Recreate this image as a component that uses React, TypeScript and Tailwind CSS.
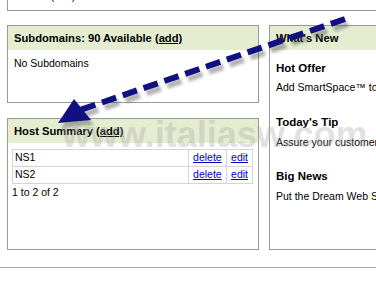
import React from 'react';

function Box({ title, className, children }: { title: React.ReactNode; className?: string; children: React.ReactNode }) {
  return (
    <div className={`border border-[#999] bg-white ${className ?? ''}`}>
      <div className="h-[24px] bg-[#e4edcf] px-[6px] flex items-center font-bold text-[11.2px]">{title}</div>
      {children}
    </div>
  );
}

function Arrow() {
  const line = 'M345 19 L80 110';
  return (
    <svg className="absolute inset-0 pointer-events-none" width="376" height="287" viewBox="0 0 376 287">
      <defs>
        <filter id="blur" x="-10%" y="-10%" width="120%" height="120%">
          <feGaussianBlur stdDeviation="1.6" />
        </filter>
      </defs>
      <g transform="translate(3 5)" opacity="0.45" filter="url(#blur)">
        <path d={line} stroke="#555" strokeWidth="6" strokeDasharray="15 7" fill="none" />
        <polygon points="58,123 74,99 91,120" fill="#555" />
      </g>
      <path d={line} stroke="#101080" strokeWidth="6" strokeDasharray="15 7" fill="none" />
      <polygon points="58,123 74,99 91,120" fill="#101080" />
    </svg>
  );
}

export default function App() {
  return (
    <div className="relative w-[376px] h-[287px] overflow-hidden bg-white text-black font-['Liberation_Sans',Arial,sans-serif] text-[10.5px]">
      <div className="-mt-[20px] pl-[7px]">
        {/* contact box, cut off at the top */}
        <div className="h-[31px] border border-r-0 border-[#999] px-[6px] pt-[9px] leading-[13px]">
          Tel: 001(323) 375-3344
        </div>

        <div className="mt-[14px] flex gap-[10px]">
          <div className="w-[252px] flex flex-col gap-[15px]">
            <Box
              className="h-[78px]"
              title={<span>Subdomains: 90 Available <a href="#" className="underline">(add)</a></span>}
            >
              <div className="px-[6px] pt-[6px]">No Subdomains</div>
            </Box>
            <Box
              className="h-[132px]"
              title={<span>Host Summary <a href="#" className="underline">(add)</a></span>}
            >
              <div className="pl-[4px] pr-[5px] pt-[6px]">
                <table className="w-full border-collapse">
                  <tbody>
                    {['NS1', 'NS2'].map((ns) => (
                      <tr key={ns} className="h-[17px]">
                        <td className="border border-[#d4d4d4] px-[2px]">{ns}</td>
                        <td className="border border-[#d4d4d4] px-[4px] w-[38px]">
                          <a href="#" className="text-[#0000cc] underline">delete</a>
                        </td>
                        <td className="border border-[#d4d4d4] px-[4px] w-[25px]">
                          <a href="#" className="text-[#0000cc] underline">edit</a>
                        </td>
                      </tr>
                    ))}
                  </tbody>
                </table>
                <div className="pt-[1px]">1 to 2 of 2</div>
              </div>
            </Box>
          </div>

          <Box className="h-[225px] flex-1 border-r-0 whitespace-nowrap overflow-hidden" title="What's New">
            <div className="px-[6px] pt-[10px] flex flex-col">
              <div className="font-bold text-[11.5px]">Hot Offer</div>
              <div className="mt-[3px]">Add SmartSpace™ to your account</div>
              <div className="mt-[18px] font-bold text-[11.5px]">Today's Tip</div>
              <div className="mt-[4px]">Assure your customers</div>
              <div className="mt-[17px] font-bold text-[11.5px]">Big News</div>
              <div className="mt-[4px]">Put the Dream Web Site</div>
            </div>
          </Box>
        </div>

        <div className="mt-[17px] -ml-[7px] border-t border-[#aaa]" />
      </div>

      {/* watermark */}
      <div className="absolute left-[62px] top-[117px] font-bold text-[36px] leading-none text-[#a8a8a8]/35 pointer-events-none">
        www.italiasw.com
      </div>

      <Arrow />
    </div>
  );
}
